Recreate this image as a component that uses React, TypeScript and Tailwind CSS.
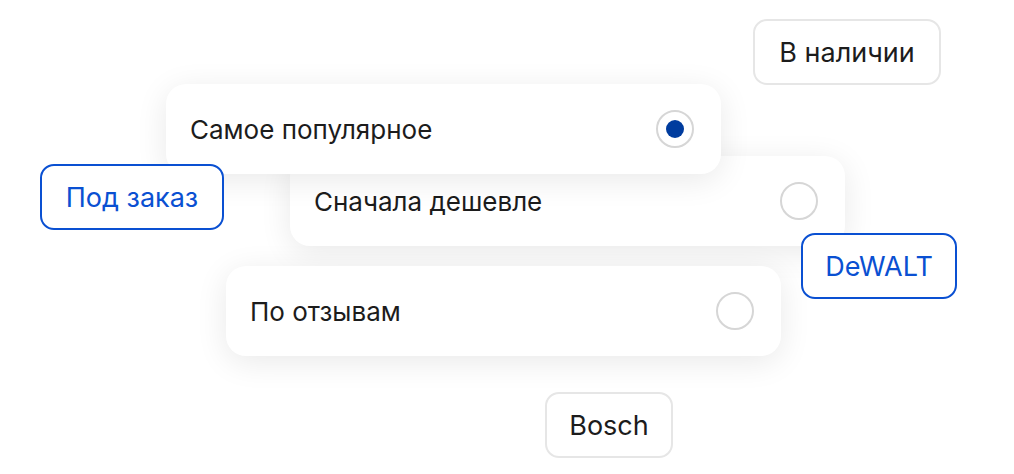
const options = [
  { label: 'Самое популярное', checked: true, pos: 'left-[166px] top-[84px] z-30' },
  { label: 'Сначала дешевле', checked: false, pos: 'left-[290px] top-[156px] z-20' },
  { label: 'По отзывам', checked: false, pos: 'left-[226px] top-[266px] z-20' },
];

const chips = [
  { label: 'В наличии', active: false, pos: 'left-[753px] top-[19px] w-[188px]' },
  { label: 'Под заказ', active: true, pos: 'left-[40px] top-[164px] w-[184px]' },
  { label: 'DeWALT', active: true, pos: 'left-[801px] top-[233px] w-[156px]' },
  { label: 'Bosch', active: false, pos: 'left-[545px] top-[392px] w-[128px]' },
];

function Radio({ checked }: { checked: boolean }) {
  return (
    <span className="w-[38px] h-[38px] rounded-full border-2 border-[#d6d6d6] flex items-center justify-center bg-white">
      {checked && <span className="w-[18px] h-[18px] rounded-full bg-[#003c9e]" />}
    </span>
  );
}

export default function App() {
  return (
    <div className="relative w-[1014px] h-[474px] bg-white overflow-hidden font-['Inter','Liberation_Sans',sans-serif] text-[#1c1c1c]">
      {/* карточки сортировки */}
      {options.map((o) => (
        <div
          key={o.label}
          className={`absolute ${o.pos} w-[555px] h-[90px] rounded-[20px] bg-white shadow-[0_6px_32px_rgba(0,0,0,0.09)] flex items-center justify-between pl-[24px] pr-[27px] text-[26px]`}
        >
          <span>{o.label}</span>
          <Radio checked={o.checked} />
        </div>
      ))}

      {/* фильтры-чипы */}
      {chips.map((c) => (
        <div
          key={c.label}
          className={`absolute ${c.pos} z-40 h-[66px] pt-[2px] rounded-[14px] bg-white flex items-center justify-center text-[27px] ${
            c.active ? 'border-2 border-[#0a50d2] text-[#0a50d2]' : 'border-2 border-[#e6e6e6]'
          }`}
        >
          {c.label}
        </div>
      ))}
    </div>
  );
}
